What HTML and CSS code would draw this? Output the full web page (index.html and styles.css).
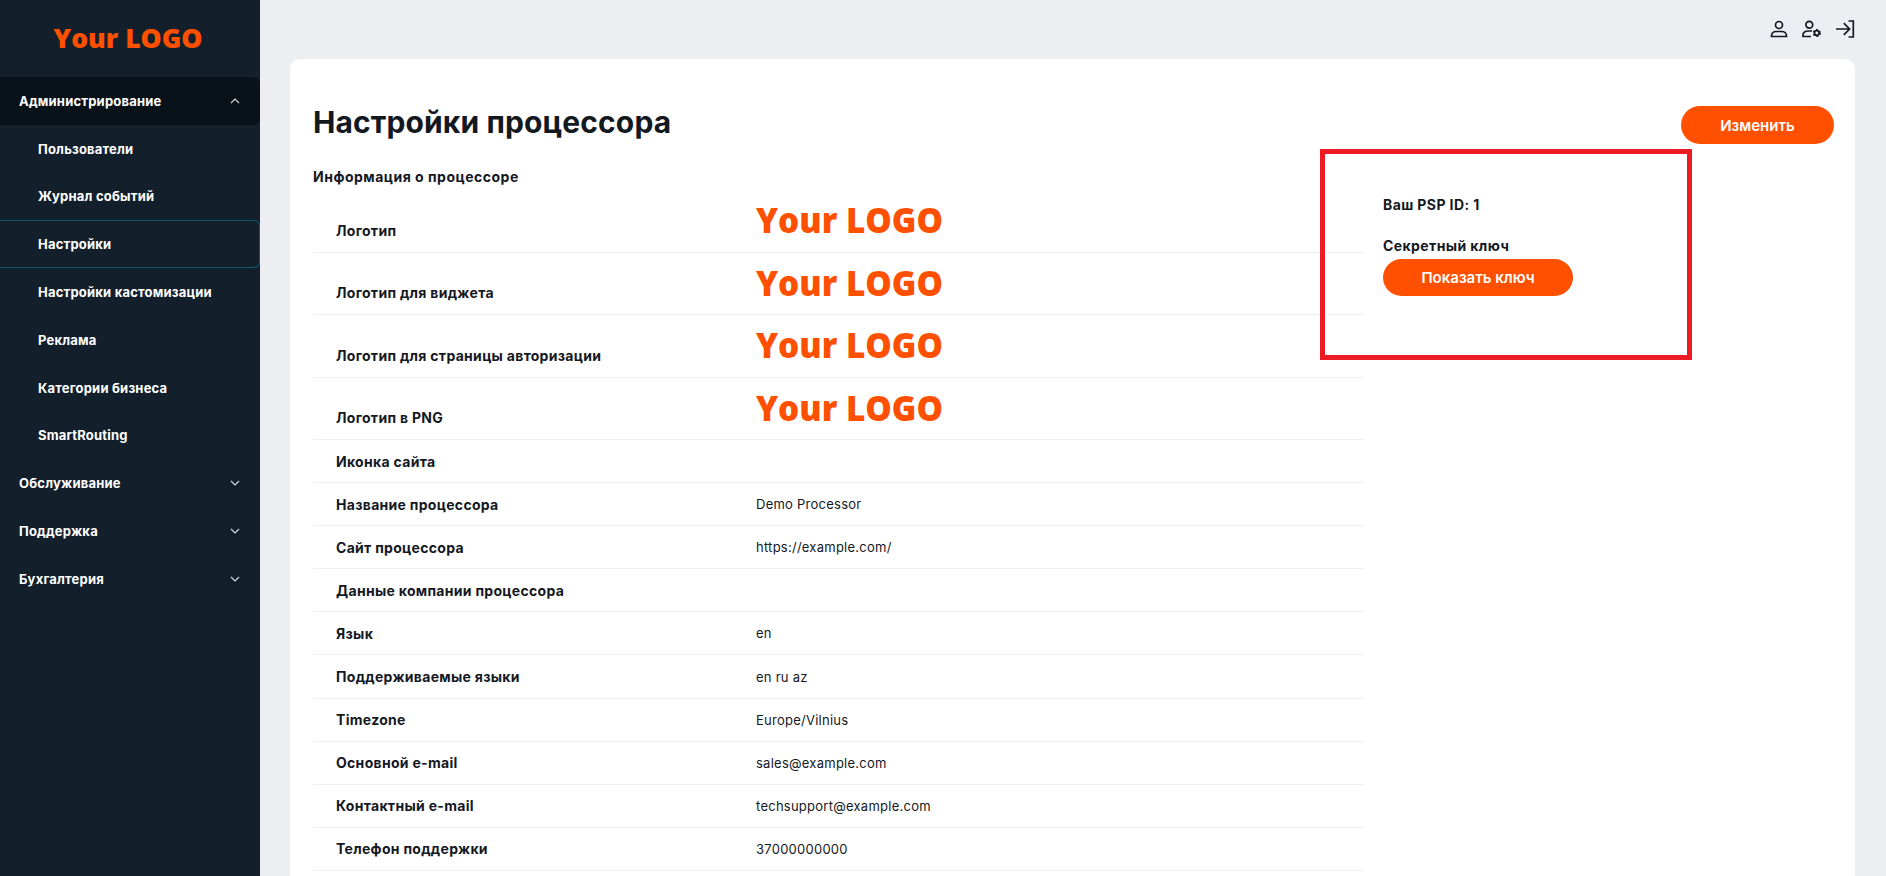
FILE: index.html
```html
<!DOCTYPE html>
<html lang="ru">
<head>
<meta charset="utf-8">
<title>Настройки процессора</title>
<link rel="stylesheet" href="styles.css">
</head>
<body>
<aside class="sidebar">
  <div class="brand">Your LOGO</div>
  <nav class="menu">
    <a class="group group-open">Администрирование
      <svg class="chev" viewBox="0 0 10 6"><path d="M1 5l4-4 4 4"/></svg></a>
    <a class="item">Пользователи</a>
    <a class="item">Журнал событий</a>
    <a class="item item-active">Настройки</a>
    <a class="item">Настройки кастомизации</a>
    <a class="item">Реклама</a>
    <a class="item">Категории бизнеса</a>
    <a class="item">SmartRouting</a>
    <a class="group">Обслуживание
      <svg class="chev" viewBox="0 0 10 6"><path d="M1 1l4 4 4-4"/></svg></a>
    <a class="group">Поддержка
      <svg class="chev" viewBox="0 0 10 6"><path d="M1 1l4 4 4-4"/></svg></a>
    <a class="group">Бухгалтерия
      <svg class="chev" viewBox="0 0 10 6"><path d="M1 1l4 4 4-4"/></svg></a>
  </nav>
</aside>
<main class="main">
  <header class="topbar">
    <svg class="ico" viewBox="0 0 20 20"><circle cx="10" cy="7" r="3.500"/><path d="M2.500 18.500h15v-.6c0-2.700-2.300-4.400-4.600-4.400H7.100c-2.300 0-4.600 1.700-4.600 4.400z"/></svg>
    <svg class="ico" viewBox="0 0 20 20"><circle cx="7.300" cy="6.800" r="3.400"/><path d="M10 13H6C3 13 1 14.800 1 16.800v1.700h8"/><circle class="gear" cx="14.800" cy="15" r="3.300"/><circle class="gear-body" cx="14.800" cy="15" r="2.300"/></svg>
    <svg class="ico" viewBox="0 0 20 20"><path d="M1 11h13.500M8.800 5.200l5.800 5.800-5.800 5.800M13.500 3h4.800v16h-4.800"/></svg>
  </header>
  <section class="card">
    <div class="card-head">
      <h1 class="title">Настройки процессора</h1>
      <button class="btn btn-edit">Изменить</button>
    </div>
    <div class="columns">
      <div class="info">
        <h2 class="subtitle">Информация о процессоре</h2>
        <div class="row row-logo"><span class="label">Логотип</span><span class="logo">Your LOGO</span></div>
        <div class="row row-logo"><span class="label">Логотип для виджета</span><span class="logo">Your LOGO</span></div>
        <div class="row row-logo"><span class="label">Логотип для страницы авторизации</span><span class="logo">Your LOGO</span></div>
        <div class="row row-logo"><span class="label">Логотип в PNG</span><span class="logo">Your LOGO</span></div>
        <div class="row"><span class="label">Иконка сайта</span><span class="value"></span></div>
        <div class="row"><span class="label">Название процессора</span><span class="value">Demo Processor</span></div>
        <div class="row"><span class="label">Сайт процессора</span><span class="value">https://example.com/</span></div>
        <div class="row"><span class="label">Данные компании процессора</span><span class="value"></span></div>
        <div class="row"><span class="label">Язык</span><span class="value">en</span></div>
        <div class="row"><span class="label">Поддерживаемые языки</span><span class="value">en ru az</span></div>
        <div class="row"><span class="label">Timezone</span><span class="value">Europe/Vilnius</span></div>
        <div class="row"><span class="label">Основной e-mail</span><span class="value">sales@example.com</span></div>
        <div class="row"><span class="label">Контактный e-mail</span><span class="value">techsupport@example.com</span></div>
        <div class="row"><span class="label">Телефон поддержки</span><span class="value">37000000000</span></div>
      </div>
      <div class="secret">
        <div class="psp">Ваш PSP ID: 1</div>
        <div class="key-label">Секретный ключ</div>
        <button class="btn btn-key">Показать ключ</button>
        <div class="annotation"></div>
      </div>
    </div>
  </section>
</main>
</body>
</html>
```
FILE: styles.css
```css
* { box-sizing: border-box; }
html, body { height: 100%; margin: 0; overflow: hidden; }
body {
  display: flex;
  background: #eceef2;
  color: #14181f;
  font-family: Inter, "Noto Sans", sans-serif;
}
.sidebar { width: 260px; flex: none; background: #13202c; }
.brand {
  height: 77px;
  padding-top: 19px;
  padding-right: 4px;
  text-align: center;
  color: #ff5000;
  font: 800 26.500px/38px "Open Sans", sans-serif;
}
.menu { display: flex; flex-direction: column; }
.group, .item {
  display: flex;
  align-items: center;
  height: 47.800px;
  color: #fff;
  font-size: 13px;
  font-weight: 700;
  letter-spacing: .2px;
}
.group { justify-content: space-between; padding: 0 20px 0 19px; }
.group-open { background: #0a1219; border-radius: 0 6px 6px 0; }
.item { padding-left: 38px; }
.item-active { border: 1px solid #0d5a6b; border-left: 0; border-radius: 0 6px 6px 0; }
.chev { width: 10px; height: 6px; fill: none; stroke: #d8dde2; stroke-width: 1.100; }
.main { flex: 1; min-width: 0; padding: 0 31px 0 30px; }
.topbar {
  height: 59px;
  display: flex;
  justify-content: flex-end;
  align-items: flex-start;
  gap: 13px;
  padding: 18px 0 0;
}
.ico { width: 20px; height: 20px; fill: none; stroke: #14181f; stroke-width: 1.700; }
.gear { stroke-width: 1.600; stroke-dasharray: 1.800 1.800; }
.gear-body { stroke-width: 1.700; }
.card {
  height: 840px;
  background: #fff;
  border-radius: 10px 10px 0 0;
  padding: 47px 21px 0 23px;
}
.card-head { display: flex; justify-content: space-between; align-items: center; height: 38px; }
.title { margin: 0 0 7px; font-size: 30px; font-weight: 700; line-height: 38px; letter-spacing: .12px; color: #14181f; }
.btn {
  border: 0;
  border-radius: 19px;
  background: #ff5000;
  color: #fff;
  font: 600 15px Inter, sans-serif;
}
.btn-edit { width: 153px; height: 38px; }
.columns { display: flex; }
.info { width: 1051px; flex: none; }
.subtitle { margin: 0; height: 46px; padding-top: 23px; font-size: 14px; font-weight: 700; line-height: 20px; letter-spacing: .5px; }
.row {
  display: grid;
  grid-template-columns: 420px 1fr;
  align-items: center;
  height: 43.100px;
  padding-left: 23px;
  border-bottom: 1px solid #f0f1f5;
  font-size: 13px;
}
.row-logo { height: 62.500px; }
.row-logo .label { align-self: end; padding-bottom: 13px; }
.label { font-size: 14px; font-weight: 700; letter-spacing: .3px; }
.value { font-weight: 400; letter-spacing: .25px; }
.logo {
  align-self: start;
  padding-top: 8px;
  color: #ff5000;
  font: 800 36px/44px "Open Sans", sans-serif;
  transform: scaleX(.925);
  transform-origin: left;
}
.secret { position: relative; flex: 1; padding: 51px 0 0 19px; font-size: 14px; font-weight: 700; letter-spacing: .4px; }
.psp { line-height: 20px; }
.key-label { margin-top: 21px; line-height: 20px; }
.btn-key { display: block; width: 190px; height: 37px; margin-top: 3px; letter-spacing: 0; font-weight: 600; }
.annotation {
  position: absolute;
  left: -44px;
  top: 5px;
  width: 372px;
  height: 211px;
  border: 5px solid #ed1c24;
}
```
